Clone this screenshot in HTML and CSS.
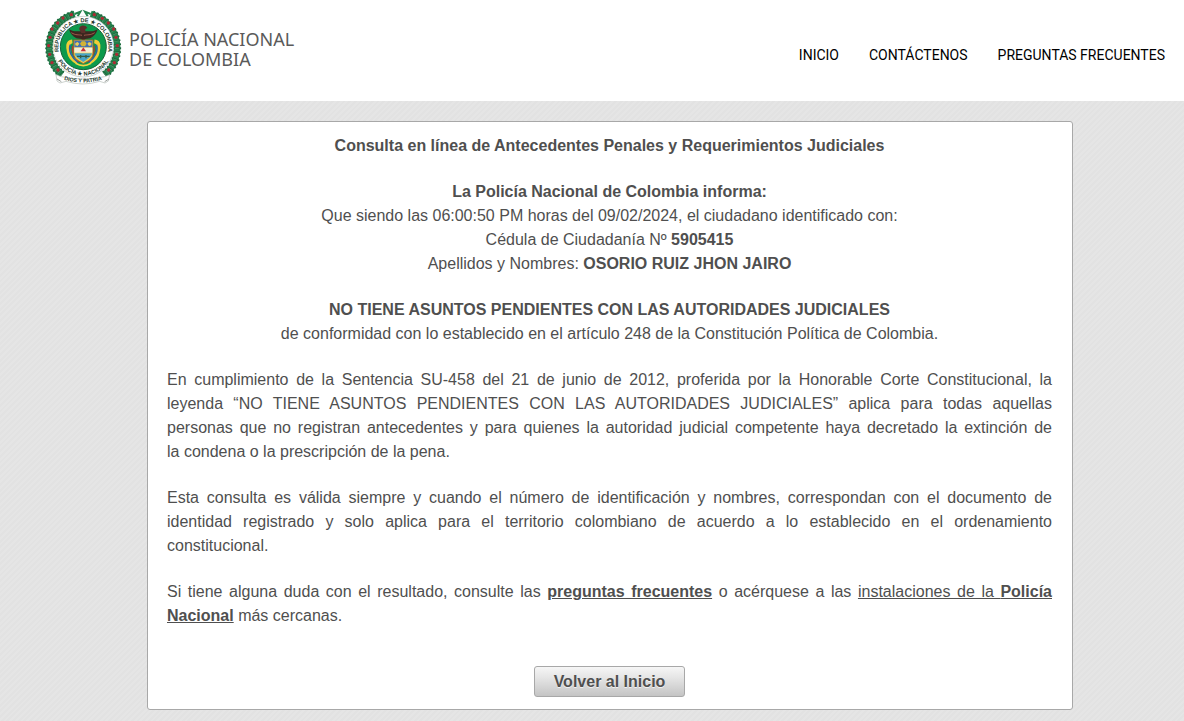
FILE: index.html
```html
<!DOCTYPE html>
<html lang="es">
<head>
<meta charset="utf-8">
<meta name="viewport" content="width=device-width, initial-scale=1">
<title>Policía Nacional de Colombia</title>
<link rel="stylesheet" href="styles.css">
</head>
<body>
<header class="header">
  <div class="brand">
    <svg class="emblem" viewBox="0 0 252 252" aria-hidden="true">
      <defs>
        <path id="arc-top" d="M62 155A75 75 0 1 1 198 155"/>
        <path id="arc-bottom" d="M44 135A87 87 0 0 0 216 135"/>
        <path id="arc-motto" d="M56 216Q128 243 202 216"/>
      </defs>
      <g fill="none">
        <path d="M66 206C8 160 12 52 104 24M194 206C252 160 246 52 152 24" stroke="#23834c" stroke-width="20"/>
        <path d="M66 206C8 160 12 52 104 24M194 206C252 160 246 52 152 24" stroke="#1c6a3e" stroke-width="24" stroke-dasharray="5 6"/>
        <path d="M66 206C8 160 12 52 104 24M194 206C252 160 246 52 152 24" stroke="#569a72" stroke-width="14" stroke-dasharray="2 9"/>
        <path d="M104 24l17-7-8 14M152 24l-17-7 8 14" stroke="#23834c" stroke-width="6"/>
      </g>
      <circle cx="130" cy="122" r="91" fill="#fff" stroke="#b4c0b8" stroke-width="2"/>
      <g fill="#ad2934">
        <circle cx="94" cy="26" r="5"/><circle cx="69" cy="36" r="5"/><circle cx="53" cy="51" r="5"/><circle cx="36" cy="69" r="5"/><circle cx="30" cy="94" r="5"/><circle cx="26" cy="119" r="5"/><circle cx="29" cy="145" r="5"/><circle cx="36" cy="170" r="5"/><circle cx="54" cy="192" r="5"/>
        <circle cx="163" cy="26" r="5"/><circle cx="187" cy="37" r="5"/><circle cx="205" cy="51" r="5"/><circle cx="221" cy="69" r="5"/><circle cx="228" cy="94" r="5"/><circle cx="232" cy="119" r="5"/><circle cx="230" cy="145" r="5"/><circle cx="223" cy="170" r="5"/><circle cx="206" cy="192" r="5"/>
      </g>
      <circle cx="130" cy="122" r="69" fill="#0c9a4c" stroke="#176338" stroke-width="3"/>
      <g class="seal-text">
        <text><textPath href="#arc-top" startOffset="50%">REPÚBLICA ★ DE ★ COLOMBIA</textPath></text>
        <text><textPath href="#arc-bottom" startOffset="50%">POLICÍA ★ NACIONAL</textPath></text>
      </g>
      <path d="M129 76c-14-2-24 4-42-6 4 13 10 21 22 27l15 2 6 8 6-8 15-2c12-6 18-14 22-27-18 10-28 4-42 6z" fill="#3d2720"/>
      <path d="M118 70c-2-12 18-17 24-4l-6 3v12h-12z" fill="#5b2f2a"/>
      <path d="M94 80c14 9 21 5 32 8M164 80c-14 9-21 5-32 8" stroke="#a15b4d" stroke-width="3" fill="none"/>
      <path d="M97 106c-19 2-12 23-10 34 2 12 13 23 24 29M163 106c19 2 12 23 10 34-2 12-13 23-24 29" fill="none" stroke="#f0cd37" stroke-width="11"/>
      <path d="M91 116c-7 19 5 40 23 53M169 116c7 19-5 40-23 53" fill="none" stroke="#2863a6" stroke-width="5"/>
      <path d="M98 120c-4 16 5 34 19 47M162 120c4 16-5 34-19 47" fill="none" stroke="#bb3137" stroke-width="4"/>
      <path d="M101 102h58v41c0 15-15 22-29 30-14-8-29-15-29-30z" fill="#f2d04b" stroke="#90652e" stroke-width="3"/>
      <path d="M103 104h54v20h-54z" fill="#406fb5"/>
      <path d="M103 125h54v15h-54z" fill="#f4edd6"/>
      <path d="M104 142h52c-2 12-14 18-26 26-12-8-24-14-26-26z" fill="#4ba6c8"/>
      <path d="M125 106h10l5 7-5 8h-10l-5-8z" fill="#d3b336"/>
      <path d="M106 111l7-3 5 5-5 7-7-2M154 111l-7-3-5 5 5 7 7-2" fill="#e9cd59"/>
      <path d="M130 124l8 12h-16z" fill="#c92f37"/>
      <path d="M111 151h38M122 147v10M138 147v10" stroke="#365c45" stroke-width="4"/>
      <path d="M107 172q23 14 46 0" stroke="#f3d546" stroke-width="5" fill="none"/>
      <path d="M48 206l16 6q65 14 130 0l15-6-4 19-10 6-16-5q-50 16-101 0l-18 5-9-6z" fill="#fff" stroke="#b3bcb6" stroke-width="2"/>
      <path d="M51 219l13 8M207 219l-13 8" stroke="#9a9e9b" stroke-width="3"/>
      <text class="motto"><textPath href="#arc-motto" startOffset="50%">DIOS Y PATRIA</textPath></text>
    </svg>
    <div class="brand-name">POLICÍA NACIONAL<br>DE COLOMBIA</div>
  </div>
  <nav class="nav">
    <a href="#">INICIO</a>
    <a href="#">CONTÁCTENOS</a>
    <a href="#">PREGUNTAS FRECUENTES</a>
  </nav>
</header>
<main class="main">
  <section class="panel">
    <h1 class="title">Consulta en línea de Antecedentes Penales y Requerimientos Judiciales</h1>
    <p class="centered"><b>La Policía Nacional de Colombia informa:</b><br>
      Que siendo las 06:00:50 PM horas del 09/02/2024, el ciudadano identificado con:<br>
      Cédula de Ciudadanía Nº <b>5905415</b><br>
      Apellidos y Nombres: <b>OSORIO RUIZ JHON JAIRO</b></p>
    <p class="centered"><b>NO TIENE ASUNTOS PENDIENTES CON LAS AUTORIDADES JUDICIALES</b><br>
      de conformidad con lo establecido en el artículo 248 de la Constitución Política de Colombia.</p>
    <p>En cumplimiento de la Sentencia SU-458 del 21 de junio de 2012, proferida por la Honorable Corte Constitucional, la leyenda “NO TIENE ASUNTOS PENDIENTES CON LAS AUTORIDADES JUDICIALES” aplica para todas aquellas personas&nbsp;que no registran antecedentes y para quienes la autoridad judicial competente haya decretado la extinción de la&nbsp;condena o la prescripción de la pena.</p>
    <p>Esta consulta es válida siempre y cuando el número de identificación y nombres, correspondan con el documento de identidad registrado y solo aplica para el territorio colombiano de acuerdo a lo establecido en el ordenamiento <span class="closing">constitucional.</span></p>
    <p>Si tiene alguna duda con el resultado, consulte las <a href="#"><b>preguntas frecuentes</b></a> o acérquese a las <a href="#">instalaciones de la <b>Policía Nacional</b></a> más cercanas.</p>
    <button class="button" type="button">Volver al Inicio</button>
  </section>
</main>
</body>
</html>
```

FILE: styles.css
```css
* {
  box-sizing: border-box;
}

body {
  margin: 0;
  min-height: 100vh;
  background: repeating-linear-gradient(135deg, #e5e5e5 0 2px, #e2e2e2 2px 4px);
  color: #4f4f4f;
  font-family: "Liberation Sans", Arial, sans-serif;
  font-size: 16px;
  line-height: 24px;
}

.header {
  display: flex;
  justify-content: space-between;
  align-items: flex-start;
  padding: 6px 19px 11px 40px;
  background: #fff;
}

.brand {
  display: flex;
  align-items: center;
  gap: 5px;
}

.emblem {
  width: 84px;
  height: 84px;
}

.seal-text,
.motto {
  fill: #24382d;
  font-family: "Liberation Sans", Arial, sans-serif;
  font-size: 17px;
  font-weight: 700;
  text-anchor: middle;
}

.motto {
  font-size: 16px;
}

.brand-name {
  padding-top: 2px;
  color: #5a5a5a;
  font-family: "Noto Sans", sans-serif;
  font-size: 18px;
  line-height: 20px;
}

.nav {
  display: flex;
  gap: 30px;
  padding-top: 37px;
}

.nav a {
  color: #000;
  font-family: Roboto, sans-serif;
  font-size: 14px;
  text-decoration: none;
}

.main {
  padding: 20px 111px 11px 147px;
}

.panel {
  display: flex;
  flex-direction: column;
  gap: 22px;
  padding: 12px 20px 12px 19px;
  background: #fff;
  border: 1px solid #a8a8a8;
  border-radius: 3px;
}

.title,
.panel p {
  margin: 0;
  font-size: 16px;
  text-align: justify;
}

.panel .title,
.panel .centered {
  text-align: center;
}

.panel a {
  color: inherit;
}

.closing {
  padding-right: 32px;
}

.button {
  align-self: center;
  margin-top: 16px;
  padding: 3px 19px;
  border: 1px solid #a8a8a8;
  border-radius: 3px;
  background: linear-gradient(#f6f6f6, #e6e6e6 35%, #c4c4c4);
  color: #4f4f4f;
  font: 700 16px/23px "Liberation Sans", Arial, sans-serif;
  text-shadow: 0 1px 0 rgba(255, 255, 255, 0.7);
}
```
